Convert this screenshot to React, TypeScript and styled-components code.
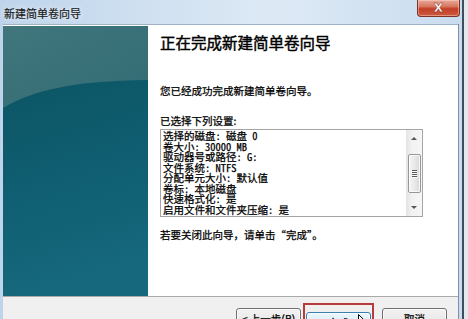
import React from "react";
import styled, { createGlobalStyle } from "styled-components";

const GlobalStyle = createGlobalStyle`
  html, body {
    margin: 0;
    padding: 0;
  }
  body {
    width: 468px;
    height: 319px;
    overflow: hidden;
    background: #e3e8ed;
    font-family: "Noto Sans CJK SC", "Noto Sans", sans-serif;
  }
`;

const settings = [
  "选择的磁盘: 磁盘 0",
  "卷大小: 30000 MB",
  "驱动器号或路径: G:",
  "文件系统: NTFS",
  "分配单元大小: 默认值",
  "卷标: 本地磁盘",
  "快速格式化: 是",
  "启用文件和文件夹压缩: 是",
];

const Window = styled.div`
  width: 464px;
  height: 319px;
  box-sizing: border-box;
  border-right: 2px solid #3f4d5c;
  background: linear-gradient(to right, #bed4eb 0%, #d4e3f2 40%, #dde9f5 60%, #c9dcef 100%);
  display: flex;
  flex-direction: column;
`;

const TitleBar = styled.div`
  height: 24px;
  flex-shrink: 0;
  display: flex;
  justify-content: space-between;
  align-items: flex-start;
  padding: 0 2px 0 4px;
`;

const Title = styled.span`
  margin-top: 7px;
  font-size: 11px;
  line-height: 13px;
  color: #1b1b1b;
  -webkit-text-stroke: 0.2px #1b1b1b;
  text-shadow: 0 0 6px rgba(255, 255, 255, 0.9);
`;

const CloseButton = styled.div`
  width: 43px;
  height: 17px;
  box-sizing: border-box;
  border: 1px solid #7a3326;
  border-top: none;
  border-radius: 0 0 4px 4px;
  background: linear-gradient(#e9a999 0%, #d7785f 40%, #c23f27 55%, #cd5a3d 100%);
  box-shadow: inset 0 0 0 1px rgba(255, 220, 210, 0.45);
  display: flex;
  align-items: center;
  justify-content: center;
  color: #fff;
  font-family: "DejaVu Sans", sans-serif;
  font-weight: bold;
  font-size: 12px;
  line-height: 12px;
  -webkit-text-stroke: 0.4px #6a2418;
`;

const Client = styled.div`
  flex: 1;
  margin: 0 3px 0 3px;
  border-right: 1px solid #7d90a5;
  display: flex;
  flex-direction: column;
  overflow: hidden;
`;

const Main = styled.div`
  height: 272px;
  flex-shrink: 0;
  box-sizing: border-box;
  border-top: 1px solid #9fb3c8;
  padding-top: 1px;
  background: #fff;
  display: flex;
`;

const Sidebar = styled.div`
  width: 145px;
  height: 270px;
  flex-shrink: 0;
  svg {
    display: block;
  }
`;

const Content = styled.div`
  flex: 1;
  padding: 6px 12px 0 12px;
  display: flex;
  flex-direction: column;
  color: #000;
  -webkit-text-stroke: 0.25px #000;
`;

const Heading = styled.h1`
  margin: 0;
  font-size: 15.5px;
  line-height: 20px;
  font-weight: 400;
  -webkit-text-stroke: 0.45px #000;
`;

const Text = styled.p<{ $mt: number }>`
  margin: ${({ $mt }) => $mt}px 0 0;
  font-size: 10.5px;
  line-height: 14px;
`;

const ListBox = styled.div`
  margin-top: 1px;
  width: 263px;
  height: 88px;
  box-sizing: border-box;
  border: 1px solid #a5a5a5;
  display: flex;
  background: #fff;
`;

const Lines = styled.div`
  flex: 1;
  overflow: hidden;
  padding: 1px 0 0 2px;
  font-family: "Noto Sans Mono CJK SC", "Liberation Mono", "Noto Sans CJK SC", monospace;
  font-size: 10.5px;
  line-height: 10.5px;
`;

const Line = styled.div`
  white-space: pre;
`;

const ScrollBar = styled.div`
  width: 16px;
  flex-shrink: 0;
  display: flex;
  flex-direction: column;
  align-items: center;
  background: linear-gradient(to right, #e4e4e4, #f2f2f2 40%, #f6f6f6);
  -webkit-text-stroke: 0;
`;

const ArrowBox = styled.div`
  height: 17px;
  width: 100%;
  display: flex;
  align-items: center;
  justify-content: center;
`;

const Arrow = styled.div<{ $down?: boolean }>`
  width: 0;
  height: 0;
  border-left: 3px solid transparent;
  border-right: 3px solid transparent;
  ${({ $down }) =>
    $down ? "border-top: 3px solid #555;" : "border-bottom: 3px solid #555;"}
`;

const Thumb = styled.div`
  margin-top: 7px;
  width: 13px;
  height: 39px;
  box-sizing: border-box;
  border: 1px solid #979797;
  border-radius: 2px;
  background: linear-gradient(to right, #f5f5f5, #e9e9e9 50%, #d8d8d8);
  box-shadow: inset 0 0 0 1px rgba(255, 255, 255, 0.8);
  display: flex;
  align-items: center;
  justify-content: center;
`;

const Grip = styled.div`
  width: 5px;
  height: 8px;
  background: repeating-linear-gradient(#5a5a5a 0 1px, #fafafa 1px 2px);
`;

const Spacer = styled.div`
  flex: 1;
`;

const Footer = styled.div`
  flex: 1;
  border-top: 1px solid #a9a9a9;
  background: #f0f0f0;
  display: flex;
  justify-content: flex-end;
  align-items: flex-start;
  padding: 11px 11px 0 0;
`;

const Button = styled.button<{ $hot?: boolean }>`
  width: 65px;
  height: 21px;
  padding: 0;
  margin: 0;
  box-sizing: border-box;
  font-family: "Noto Sans CJK SC", sans-serif;
  font-size: 10.5px;
  line-height: 19px;
  color: #000;
  -webkit-text-stroke: 0.25px #000;
  border: 1px solid ${({ $hot }) => ($hot ? "#3c7fb1" : "#707070")};
  border-radius: 3px;
  background: ${({ $hot }) =>
    $hot
      ? "linear-gradient(#eaf6fd 0%, #d9f0fc 50%, #bee6fd 50%, #a7d9f5 100%)"
      : "linear-gradient(#f2f2f2 0%, #ebebeb 50%, #dddddd 50%, #cfcfcf 100%)"};
  box-shadow: inset 0 0 0 1px rgba(255, 255, 255, 0.7);
`;

const Highlight = styled.div`
  position: relative;
  margin: -5px 8px 0 2px;
  padding: 3px 1px 0 1px;
  border: 2px solid #b53c3a;
  border-bottom: none;
`;

const Cursor = styled.svg`
  position: absolute;
  left: 53px;
  top: 9px;
`;

export default function App() {
  return (
    <>
      <GlobalStyle />
      <Window>
        <TitleBar>
          <Title>新建简单卷向导</Title>
          <CloseButton>X</CloseButton>
        </TitleBar>
        <Client>
          <Main>
            <Sidebar>
              <svg width="145" height="270" viewBox="0 0 145 270">
                <defs>
                  <linearGradient id="sbTop" x1="0" y1="0" x2="0.3" y2="1">
                    <stop offset="0" stopColor="#40767c" />
                    <stop offset="1" stopColor="#296470" />
                  </linearGradient>
                  <linearGradient id="sbBot" x1="0" y1="0" x2="0.2" y2="1">
                    <stop offset="0" stopColor="#0c5564" />
                    <stop offset="0.5" stopColor="#0f5e71" />
                    <stop offset="1" stopColor="#16687c" />
                  </linearGradient>
                </defs>
                <rect width="145" height="270" fill="url(#sbTop)" />
                <path
                  d="M0 82 C 30 64, 70 55, 145 54 L145 270 L0 270 Z"
                  fill="url(#sbBot)"
                />
              </svg>
            </Sidebar>
            <Content>
              <Heading>正在完成新建简单卷向导</Heading>
              <Text $mt={32}>您已经成功完成新建简单卷向导。</Text>
              <Text $mt={16}>已选择下列设置:</Text>
              <ListBox>
                <Lines>
                  {settings.map((s) => (
                    <Line key={s}>{s}</Line>
                  ))}
                </Lines>
                <ScrollBar>
                  <ArrowBox>
                    <Arrow />
                  </ArrowBox>
                  <Thumb>
                    <Grip />
                  </Thumb>
                  <Spacer />
                  <ArrowBox>
                    <Arrow $down />
                  </ArrowBox>
                </ScrollBar>
              </ListBox>
              <Text $mt={11}>若要关闭此向导，请单击“完成”。</Text>
            </Content>
          </Main>
          <Footer>
            <Button>&lt; 上一步(B)</Button>
            <Highlight>
              <Button $hot>完成</Button>
              <Cursor width="9" height="13" viewBox="0 0 9 13">
                <path
                  d="M0.5 0.5 L0.5 10.5 L3 8.2 L4.8 12 L6.3 11.3 L4.6 7.6 L7.8 7.6 Z"
                  fill="#fff"
                  stroke="#000"
                  strokeWidth="1"
                />
              </Cursor>
            </Highlight>
            <Button>取消</Button>
          </Footer>
        </Client>
      </Window>
    </>
  );
}
